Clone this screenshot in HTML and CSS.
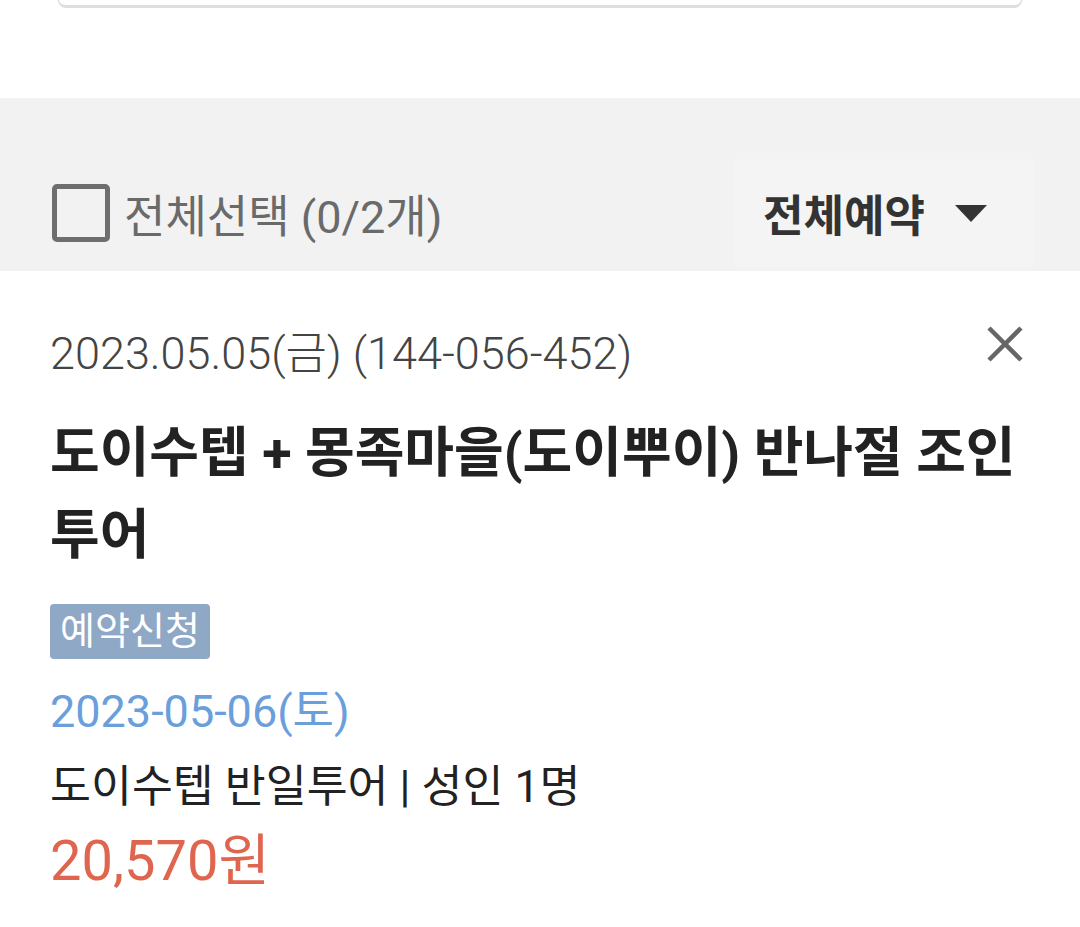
FILE: index.html
```html
<!DOCTYPE html>
<html lang="ko">
<head>
    <meta charset="UTF-8">
    <meta name="viewport" content="width=device-width, initial-scale=1.0">
    <title>장바구니</title>
    <link rel="stylesheet" href="styles.css">
</head>
<body>
    <div class="search-box"></div>

    <div class="toolbar">
        <label class="select-all">
            <span class="checkbox"></span>
            <span class="select-text">전체선택 (0/2개)</span>
        </label>
        <div class="filter">
            <span class="filter-text">전체예약</span>
            <span class="caret"></span>
        </div>
    </div>

    <div class="card">
        <div class="card-head">
            <div class="order-date">2023.05.05(금) (144-056-452)</div>
            <button class="close" type="button">
                <svg width="36" height="36" viewBox="0 0 36 36">
                    <path d="M2 2 L34 34 M34 2 L2 34" stroke="#666" stroke-width="4.5" fill="none"/>
                </svg>
            </button>
        </div>
        <div class="title">도이수텝 + 몽족마을(도이뿌이) 반나절 조인 투어</div>
        <span class="badge">예약신청</span>
        <div class="tour-date">2023-05-06(토)</div>
        <div class="option">도이수텝 반일투어 | 성인 1명</div>
        <div class="price">20,570원</div>
    </div>
</body>
</html>
```

FILE: styles.css
```css
body {
    margin: 0;
    background: #fff;
    font-family: Roboto, "Noto Sans CJK KR", sans-serif;
    color: #222;
}

.search-box {
    margin: 0 58px;
    height: 5px;
    border: 1px solid #d4d4d4;
    border-top: none;
    border-bottom: 3px solid #dedede;
    border-radius: 0 0 8px 8px;
}

.toolbar {
    margin-top: 90px;
    height: 173px;
    box-sizing: border-box;
    padding: 61px 46px 4px 52px;
    background: #f2f2f2;
    display: flex;
    justify-content: space-between;
    align-items: center;
}

.select-all {
    display: flex;
    align-items: center;
    gap: 14px;
}

.checkbox {
    width: 58px;
    height: 58px;
    box-sizing: border-box;
    border: 5px solid #6e6e6e;
    border-radius: 5px;
}

.select-text {
    font-size: 45px;
    color: #6a6a6a;
}

.filter {
    height: 108px;
    box-sizing: border-box;
    padding: 0 47px 0 30px;
    background: #f4f4f4;
    border-radius: 4px;
    display: flex;
    align-items: center;
    gap: 30px;
}

.filter-text {
    font-size: 44px;
    font-weight: bold;
    color: #333;
}

.caret {
    width: 0;
    height: 0;
    border-left: 16px solid transparent;
    border-right: 16px solid transparent;
    border-top: 17px solid #333;
}

.card {
    padding: 55px 50px 0 50px;
}

.card-head {
    display: flex;
    justify-content: space-between;
    align-items: flex-start;
}

.order-date {
    font-size: 45px;
    font-weight: 300;
    line-height: 56px;
    color: #444;
}

.close {
    margin: 0 7px 0 0;
    padding: 0;
    border: none;
    background: none;
    width: 36px;
    height: 36px;
}

.title {
    margin-top: 31px;
    font-size: 54px;
    font-weight: bold;
    line-height: 82px;
    color: #222;
}

.badge {
    display: inline-block;
    margin-top: 27px;
    padding: 0 10px;
    height: 55px;
    line-height: 55px;
    font-size: 38px;
    color: #fff;
    background: #8fa8c6;
    border-radius: 4px;
}

.tour-date {
    margin-top: 25px;
    font-size: 45px;
    line-height: 56px;
    color: #6a9fdc;
}

.option {
    margin-top: 19px;
    font-size: 44.5px;
    line-height: 56px;
    color: #222;
}

.price {
    margin-top: 14px;
    font-size: 56px;
    line-height: 64px;
    color: #e0654f;
}
```
